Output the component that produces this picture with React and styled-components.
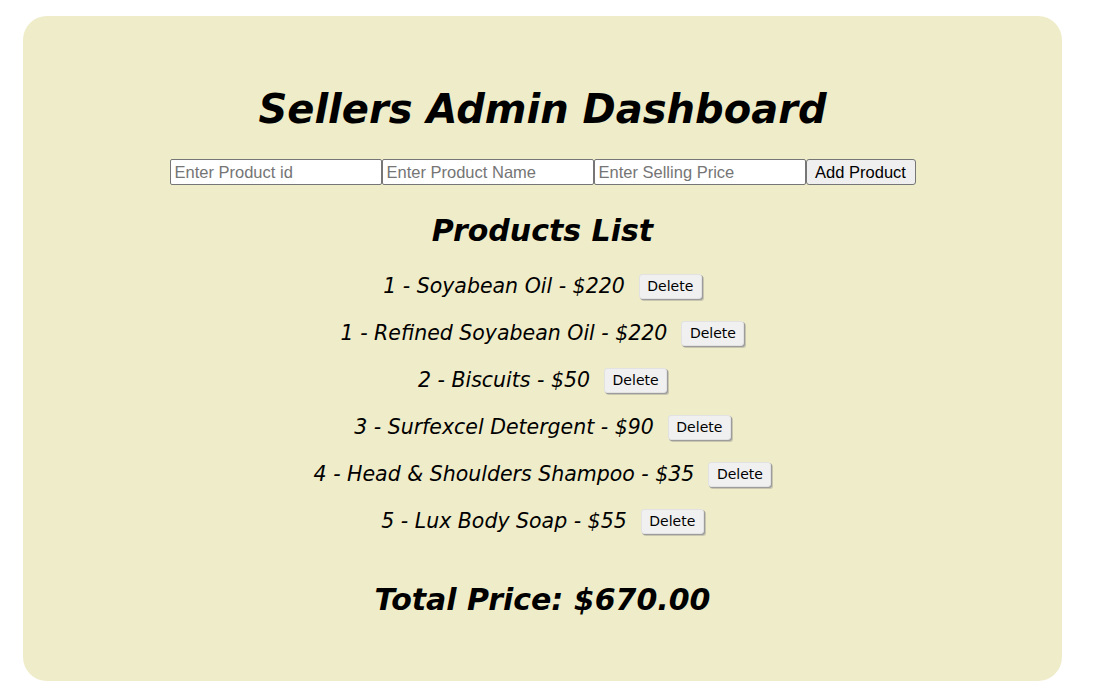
import React from 'react';
import styled, { createGlobalStyle } from 'styled-components';

const GlobalStyle = createGlobalStyle`
  body {
    margin: 0;
    background: #ffffff;
    font-family: "DejaVu Sans", Verdana, sans-serif;
  }
`;

const Panel = styled.div`
  box-sizing: border-box;
  width: 1039px;
  height: 665px;
  margin: 16px 0 0 23px;
  padding-top: 69px;
  background: #efecc9;
  border-radius: 24px;
  display: flex;
  flex-direction: column;
  align-items: center;
`;

const Title = styled.h1`
  margin: 0;
  font-size: 40px;
  line-height: 48px;
  font-weight: bold;
  font-style: italic;
  color: #000;
`;

const Form = styled.div`
  display: flex;
  margin-top: 26px;
`;

const Input = styled.input`
  box-sizing: border-box;
  width: 212px;
  height: 26px;
  padding: 1px 4px;
  border: 1px solid #767676;
  border-radius: 2px;
  background: #fff;
  font-family: "Liberation Sans", Arial, sans-serif;
  font-size: 16.5px;
  color: #000;
  outline: none;

  &::placeholder {
    color: #757575;
  }
`;

const AddButton = styled.button`
  box-sizing: border-box;
  width: 110px;
  height: 26px;
  padding: 0;
  border: 1px solid #767676;
  border-radius: 3px;
  background: #efefef;
  font-family: "Liberation Sans", Arial, sans-serif;
  font-size: 16.5px;
  color: #000;
`;

const SubTitle = styled.h2`
  margin: 28px 0 0;
  font-size: 30px;
  line-height: 36px;
  font-weight: bold;
  font-style: italic;
`;

const List = styled.div`
  display: flex;
  flex-direction: column;
  align-items: center;
  gap: 23px;
  margin-top: 25px;
`;

const Row = styled.div`
  display: flex;
  align-items: center;
  height: 24px;
  gap: 14px;
`;

const ItemText = styled.span`
  font-size: 20.5px;
  font-style: italic;
  line-height: 24px;
`;

const DeleteButton = styled.button`
  box-sizing: border-box;
  width: 63px;
  height: 25px;
  padding: 0;
  border: 1px solid #e2e2e2;
  border-radius: 3px;
  background: #f0f0f0;
  box-shadow: 1px 1px 0 #9c9c9c, 2px 2px 0 #c9c6b0;
  font-family: "DejaVu Sans", Tahoma, sans-serif;
  font-size: 14px;
  color: #000;
`;

const Total = styled.h2`
  margin: 49px 0 0;
  font-size: 30px;
  line-height: 36px;
  font-weight: bold;
  font-style: italic;
`;

const products = [
  { id: 1, name: 'Soyabean Oil', price: 220 },
  { id: 1, name: 'Refined Soyabean Oil', price: 220 },
  { id: 2, name: 'Biscuits', price: 50 },
  { id: 3, name: 'Surfexcel Detergent', price: 90 },
  { id: 4, name: 'Head & Shoulders Shampoo', price: 35 },
  { id: 5, name: 'Lux Body Soap', price: 55 },
];

const App = () => {
  const total = products.reduce((sum, p) => sum + p.price, 0);
  return (
    <>
      <GlobalStyle />
      <Panel>
        <Title>Sellers Admin Dashboard</Title>
        <Form>
          <Input placeholder="Enter Product id" />
          <Input placeholder="Enter Product Name" />
          <Input placeholder="Enter Selling Price" />
          <AddButton>Add Product</AddButton>
        </Form>
        <SubTitle>Products List</SubTitle>
        <List>
          {products.map((p, i) => (
            <Row key={i}>
              <ItemText>
                {p.id} - {p.name} - ${p.price}
              </ItemText>
              <DeleteButton>Delete</DeleteButton>
            </Row>
          ))}
        </List>
        <Total>Total Price: ${total.toFixed(2)}</Total>
      </Panel>
    </>
  );
};

export default App;
